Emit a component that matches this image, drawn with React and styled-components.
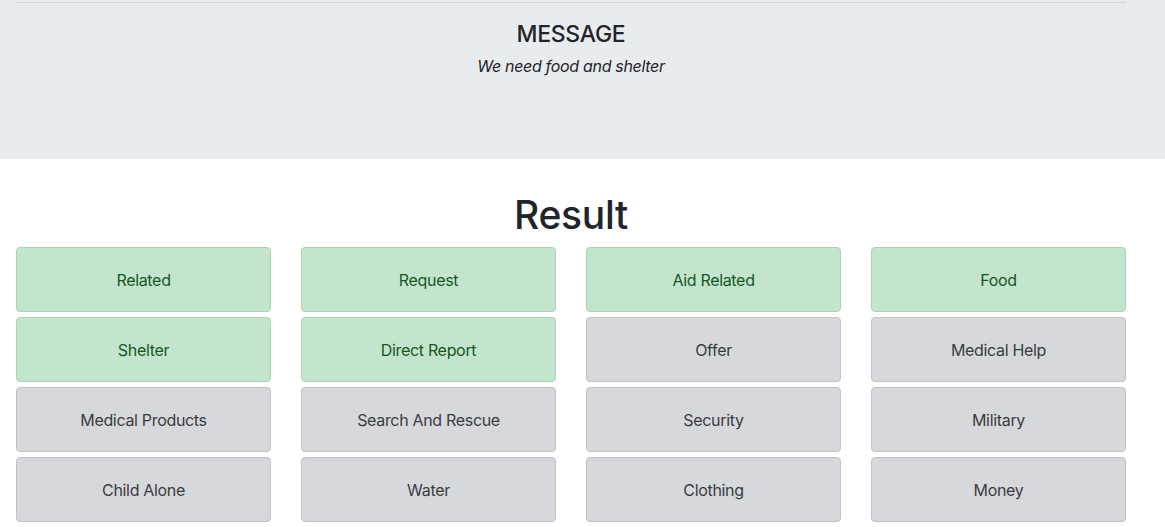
import React from "react";
import styled, { createGlobalStyle } from "styled-components";

const GlobalStyle = createGlobalStyle`
  body {
    margin: 0;
    background: #fff;
    color: #212529;
    font-family: Inter, "Noto Sans", sans-serif;
    letter-spacing: -0.02em;
  }
`;

const Styled = {
  Jumbotron: styled.section`
    background: #e9ecef;
    padding: 2px 0 0;
    height: 159px;
    box-sizing: border-box;
  `,
  Container: styled.div`
    width: 1110px;
    margin-left: 16px;
  `,
  Rule: styled.hr`
    margin: 0;
    border: 0;
    border-top: 1px solid rgba(0, 0, 0, 0.1);
  `,
  Title: styled.h4`
    margin: 18px 0 5px;
    font-size: 23px;
    font-weight: 500;
    line-height: 1.2;
    text-align: center;
  `,
  Message: styled.p`
    margin: 0;
    font-size: 16px;
    line-height: 24px;
    font-style: italic;
    text-align: center;
  `,
  Heading: styled.h1`
    margin: 33px 0 8px;
    font-size: 39px;
    font-weight: 500;
    line-height: 1.2;
    text-align: center;
  `,
  Grid: styled.div`
    display: grid;
    grid-template-columns: repeat(4, 255px);
    column-gap: 30px;
    row-gap: 5px;
  `,
  Tag: styled.div`
    height: 65px;
    box-sizing: border-box;
    padding-top: 1px;
    display: flex;
    align-items: center;
    justify-content: center;
    border-radius: 4px;
    font-size: 16px;
    border: 1px solid ${p => (p.$on ? "#a9d4b4" : "#bfc1c5")};
    background: ${p => (p.$on ? "#c4e5cd" : "#d7d8dc")};
    color: ${p => (p.$on ? "#155724" : "#383d41")};
  `
};

const categories = [
  ["Related", true],
  ["Request", true],
  ["Aid Related", true],
  ["Food", true],
  ["Shelter", true],
  ["Direct Report", true],
  ["Offer", false],
  ["Medical Help", false],
  ["Medical Products", false],
  ["Search And Rescue", false],
  ["Security", false],
  ["Military", false],
  ["Child Alone", false],
  ["Water", false],
  ["Clothing", false],
  ["Money", false]
];

export default function App() {
  return (
    <>
      <GlobalStyle />
      <Styled.Jumbotron>
        <Styled.Container>
          <Styled.Rule />
          <Styled.Title>MESSAGE</Styled.Title>
          <Styled.Message>We need food and shelter</Styled.Message>
        </Styled.Container>
      </Styled.Jumbotron>
      <Styled.Container>
        <Styled.Heading>Result</Styled.Heading>
        <Styled.Grid>
          {categories.map(([name, on]) => (
            <Styled.Tag key={name} $on={on}>
              {name}
            </Styled.Tag>
          ))}
        </Styled.Grid>
      </Styled.Container>
    </>
  );
}
